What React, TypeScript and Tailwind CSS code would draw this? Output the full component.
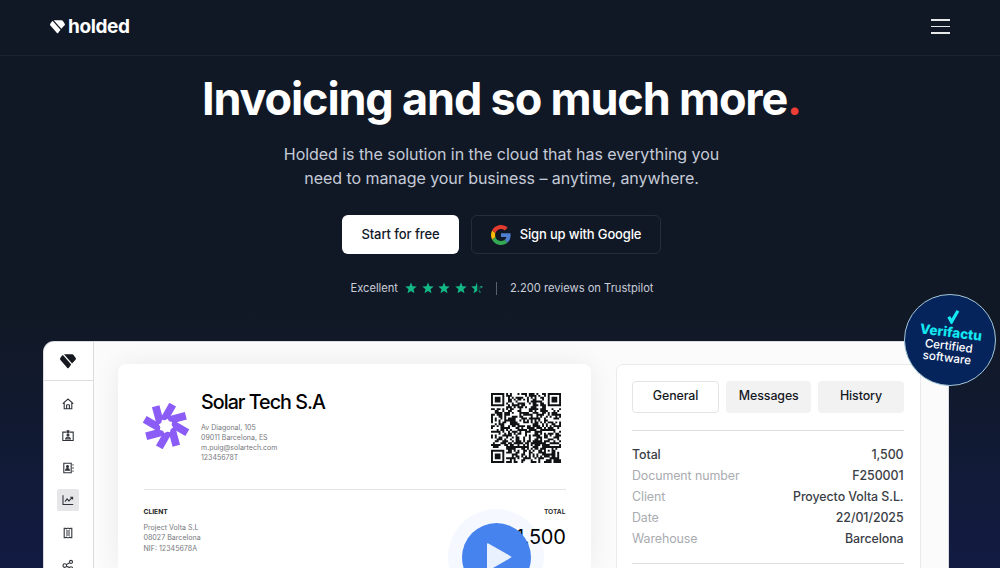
import React from "react";

const QR_SIZE = 37;

function finderAt(x: number, y: number): boolean | null {
  const corners = [
    [0, 0],
    [QR_SIZE - 7, 0],
    [0, QR_SIZE - 7],
  ];
  for (const [cx, cy] of corners) {
    const d = Math.max(Math.abs(x - cx - 3), Math.abs(y - cy - 3));
    if (d <= 4) return d <= 1 || d === 3;
  }
  const a = Math.max(Math.abs(x - 30), Math.abs(y - 30));
  if (a <= 2) return a !== 1;
  return null;
}

function qrPath(): string {
  let seed = 20250122;
  let d = "";
  for (let y = 0; y < QR_SIZE; y++) {
    for (let x = 0; x < QR_SIZE; x++) {
      seed = (Math.imul(seed, 1664525) + 1013904223) >>> 0;
      const fixed = finderAt(x, y);
      const on = fixed === null ? seed / 4294967296 < 0.55 : fixed;
      if (on) d += `M${x} ${y}h1.03v1.03h-1.03z`;
    }
  }
  return d;
}

const QR_PATH = qrPath();

function HoldedMark({ className }: { className: string }) {
  return (
    <svg viewBox="0 0 15 14" className={className} fill="currentColor">
      <path d="M2.9 1.2 10.5 9.7 8.3 12.8Q7.5 13.8 6.7 12.8L.4 5.6Q-.3 4.7.3 3.8L1.9 1.4Q2.4.8 2.9 1.2Z" />
      <path d="M3.7.2H11.5Q12.2.2 12.7.8L14.7 3.7Q15.2 4.5 14.6 5.3L11.3 8.8Z" />
    </svg>
  );
}

function GoogleLogo() {
  return (
    <svg viewBox="0 0 48 48" className="size-[20px]">
      <path fill="#4f7fd0" d="M46.98 24.55c0-1.57-.15-3.09-.38-4.55H24v9.02h12.94c-.58 2.96-2.26 5.48-4.78 7.18l7.73 6c4.51-4.18 7.09-10.36 7.09-17.65z" />
      <path fill="#35a853" d="M24 48c6.48 0 11.93-2.13 15.89-5.81l-7.73-6c-2.15 1.45-4.92 2.3-8.16 2.3-6.26 0-11.57-4.22-13.47-9.91l-7.98 6.19C6.51 42.62 14.62 48 24 48z" />
      <path fill="#fbbc05" d="M10.53 28.59c-.48-1.45-.76-2.99-.76-4.59s.27-3.14.76-4.59l-7.98-6.19C.92 16.46 0 20.12 0 24c0 3.88.92 7.54 2.56 10.78l7.97-6.19z" />
      <path fill="#e33b2e" d="M24 9.5c3.54 0 6.71 1.22 9.21 3.6l6.85-6.85C35.9 2.38 30.47 0 24 0 14.62 0 6.51 5.38 2.56 13.22l7.98 6.19C12.43 13.72 17.74 9.5 24 9.5z" />
    </svg>
  );
}

const STAR = "M6 .4 7.55 4.3 11.7 4.6 8.5 7.3 9.5 11.3 6 9.1 2.5 11.3 3.5 7.3.3 4.6 4.45 4.3Z";

function Stars() {
  return (
    <div className="flex gap-[4.5px]">
      {[0, 1, 2, 3].map((i) => (
        <svg key={i} viewBox="0 0 12 12" className="size-3" fill="#12b886">
          <path d={STAR} />
        </svg>
      ))}
      <svg viewBox="0 0 12 12" className="size-3">
        <path d={STAR} fill="#12b886" fillOpacity="0.22" />
        <path d="M6 .4V9.1L2.5 11.3 3.5 7.3.3 4.6 4.45 4.3Z" fill="#12b886" />
        <path d="m9 4.6 2.4.2-1.6 1.3M8.6 8.7l.6 2.2" stroke="#12b886" strokeWidth="0.8" fill="none" />
      </svg>
    </div>
  );
}

const navIcons: React.ReactNode[] = [
  <path d="M.8 5.7 6 1.1l5.2 4.6M2.2 4.7v6h7.6v-6M4.6 10.6V7.3q0-.6.6-.6h1.6q.6 0 .6.6v3.3" />,
  <>
    <path d="M4.3 2.1H.8v8.4h10.4V2.1H7.7M3.6 8.9q.3-1.7 2.4-1.7t2.4 1.7Z" />
    <circle cx="6" cy="5.1" r="1" fill="currentColor" />
    <path d="M5.1.8h1.8v2H5.1z" fill="currentColor" />
  </>,
  <>
    <path d="M1.8 1.2h7.4v9.6H1.8ZM11 2.2v1.4M11 5.3v1.4M11 8.4v1.4" />
    <circle cx="5.5" cy="4.5" r="1" fill="currentColor" />
    <path d="M3.5 8.2q.2-1.6 2-1.6t2 1.6Z" fill="currentColor" />
  </>,
  <path d="M1 1.2v9.3h10.2M3 7.6l2.1-2.7 1.8 2 3.5-3.5M8.2 3.2h2.4v2.3" />,
  <path d="M2.2 1.2h1.2l.9.6.9-.6h1.6l.9.6.9-.6h1.2v9.6H8.6l-.9-.6-.9.6H5.2l-.9-.6-.9.6H2.2ZM4 4h4M4 6h4M4 8h4" />,
  <>
    <circle cx="2.8" cy="6.6" r="1.8" />
    <circle cx="9" cy="2.9" r="1.5" />
    <circle cx="9" cy="9.3" r="1.6" />
    <path d="m4.4 5.6 3.2-1.9M4.5 7.3l2.9 1.3" />
  </>,
];

const details = [
  ["Document number", "F250001"],
  ["Client", "Proyecto Volta S.L."],
  ["Date", "22/01/2025"],
  ["Warehouse", "Barcelona"],
];

function Header() {
  return (
    <header className="flex h-[56px] shrink-0 items-center justify-between border-b border-[#1c2431] px-[50px]">
      <div className="flex items-center gap-[3px] pb-[1px] text-white">
        <HoldedMark className="h-[14px] w-[15px]" />
        <span className="text-[19px] leading-[20px] font-bold tracking-[-0.4px]">holded</span>
      </div>
      <div className="flex w-[19px] flex-col gap-[5px] pb-[2px] opacity-90">
        <span className="h-[1.5px] bg-white" />
        <span className="h-[1.5px] bg-white" />
        <span className="h-[1.5px] bg-white" />
      </div>
    </header>
  );
}

function Hero() {
  return (
    <section className="flex h-[286px] shrink-0 flex-col items-center">
      <h1 className="mt-[15px] ml-[3px] text-[45px] leading-[56px] font-bold tracking-[-1.16px] whitespace-nowrap text-white">
        Invoicing and so much more<span className="text-[#ef3e36]">.</span>
      </h1>
      <p className="mt-[15px] ml-[3px] text-center text-[16px] leading-[24px] tracking-[-0.05px] whitespace-nowrap text-[#c5cbd8]">
        Holded is the solution in the cloud that has everything you
        <br />
        need to manage your business – anytime, anywhere.
      </p>
      <div className="mt-[25px] ml-[3px] flex gap-[12px]">
        <button className="h-[39px] w-[117px] rounded-[6px] bg-white text-[13px] font-medium tracking-[-0.08px] text-[#111827]">
          Start for free
        </button>
        <button className="flex h-[39px] w-[190px] items-center justify-center gap-[9px] rounded-[6px] border border-[#252d3a] text-[13px] font-medium tracking-[-0.15px] text-white">
          <GoogleLogo />
          Sign up with Google
        </button>
      </div>
      <div className="mt-[26px] ml-[4px] flex h-[16px] items-center text-[11.15px] whitespace-nowrap text-[#c9ced9]">
        <span className="mr-[7px]">Excellent</span>
        <Stars />
        <span className="mr-[13px] ml-[13px] h-[13px] w-px bg-[#566070]" />
        <span>2.200 reviews on Trustpilot</span>
      </div>
    </section>
  );
}

function Sidebar() {
  return (
    <aside className="flex w-[50px] shrink-0 flex-col items-center border-r border-[#dcdcdf] bg-white pr-px">
      <div className="flex h-[39px] w-[49px] shrink-0 items-center justify-center border-b-[1.5px] border-[#dddde0] text-[#15181e]">
        <HoldedMark className="h-[15px] w-[16px]" />
      </div>
      <nav className="mt-[11.5px] flex flex-col gap-[10.3px]">
        {navIcons.map((icon, i) => (
          <span
            key={i}
            className={`flex size-[22px] items-center justify-center rounded-[2px] text-[#30343a] ${i === 3 ? "bg-[#e6e6e8]" : ""}`}
          >
            <svg viewBox="0 0 12 12" className="size-[12px]" fill="none" stroke="currentColor" strokeWidth="1.1">
              {icon}
            </svg>
          </span>
        ))}
      </nav>
    </aside>
  );
}

function SolarLogo() {
  return (
    <svg viewBox="-23 -23 46 46" className="mt-[14px] -ml-px size-[46px]" fill="#8b5cf6">
      <circle r="10.5" />
      {[30, 75, 120, 165, 210, 255, 300, 345].map((a) => (
        <rect key={a} transform={`rotate(${a})`} x="-8.7" y="-21.8" width="7.7" height="17.5" />
      ))}
      {[0, 45].map((a) => (
        <rect key={a} transform={`rotate(${a + 12})`} x="-5.2" y="-5.2" width="10.4" height="10.4" fill="#fff" />
      ))}
    </svg>
  );
}

function Invoice() {
  return (
    <div className="mt-[22px] ml-[24px] w-[473px] shrink-0 rounded-t-[8px] bg-white px-[25.5px] pt-[25px] shadow-[0_0_26px_rgba(0,0,0,0.07)]">
      <div className="flex h-[99.5px]">
        <SolarLogo />
        <div className="ml-[12.5px] flex-1">
          <div className="text-[19.7px] leading-[26px] font-medium tracking-[-0.98px] text-black">Solar Tech S.A</div>
          <div className="mt-[7.5px] text-[7px] leading-[10.3px] text-[#76787c]">
            Av Diagonal, 105
            <br />
            09011 Barcelona, ES
            <br />
            m.puig@solartech.com
            <br />
            12345678T
          </div>
        </div>
        <svg viewBox="0 0 37 37" className="mt-[4px] mr-[4.5px] size-[70px]" fill="#111214">
          <path d={QR_PATH} />
        </svg>
      </div>
      <div className="h-[1.5px] bg-[#e2e2e4]" />
      <div className="mt-[17px] flex justify-between">
        <div>
          <div className="text-[6.7px] leading-[10px] font-bold text-[#222]">CLIENT</div>
          <div className="mt-[6px] text-[7.1px] leading-[10.3px] text-[#76787c]">
            Project Volta S.L
            <br />
            08027 Barcelona
            <br />
            NIF: 12345678A
          </div>
        </div>
        <div className="text-right">
          <div className="text-[6.7px] leading-[10px] font-semibold text-[#222]">TOTAL</div>
          <div className="mt-[7px] text-[20px] leading-[26px] tracking-[-0.3px] text-black">1.500</div>
        </div>
      </div>
    </div>
  );
}

function DetailsPanel() {
  return (
    <div className="mt-[22px] ml-[24.5px] h-[260px] w-[305px] shrink-0 rounded-[7px] border-[1.5px] border-[#eaeaec] bg-white pr-[16px] pl-[15.5px] pt-[15.5px]">
      <div className="flex gap-[7px] text-[12.4px] font-medium tracking-[-0.1px] text-[#15181e]">
        <button className="h-[32px] flex-1 rounded-[4px] border-[1.5px] border-[#e4e4e6]">General</button>
        <button className="h-[32px] flex-1 rounded-[4px] bg-[#f2f2f3]">Messages</button>
        <button className="h-[32px] flex-1 rounded-[4px] bg-[#f2f2f3]">History</button>
      </div>
      <div className="mt-[17px] h-px bg-[#dddddf]" />
      <dl className="mt-[13px] text-[12.4px] leading-[21.2px] tracking-[-0.08px]">
        <div className="flex justify-between font-medium text-[#3a3e46]">
          <dt>Total</dt>
          <dd>1,500</dd>
        </div>
        {details.map(([label, value]) => (
          <div key={label} className="flex justify-between">
            <dt className="text-[#a9abb0]">{label}</dt>
            <dd className="font-medium text-[#3a3e46]">{value}</dd>
          </div>
        ))}
      </dl>
      <div className="mt-[13.5px] h-px bg-[#dddddf]" />
    </div>
  );
}

function Badge() {
  return (
    <div className="absolute top-[294px] left-[904px] flex size-[92px] items-center justify-center rounded-full border border-[#a5c8d8] bg-[#06245c]">
      <div className="flex rotate-[7deg] flex-col items-center pb-[6px] text-white">
        <svg viewBox="0 0 12 14" className="mb-[1px] h-[15px] w-[13px]">
          <path d="M1.8 7.6 4.9 12 9.6 1" fill="none" stroke="#12e9f2" strokeWidth="3" />
        </svg>
        <span className="text-[13.5px] leading-[15px] font-extrabold text-[#12e9f2]">Verifactu</span>
        <span className="mr-[1px] text-[11.6px] leading-[12.3px] font-medium">Certified</span>
        <span className="mr-[2px] text-[11.6px] leading-[12.3px] font-medium">software</span>
      </div>
    </div>
  );
}

export default function App() {
  return (
    <div className="relative flex h-[568px] w-[1000px] flex-col overflow-hidden bg-linear-to-b from-[#111825] from-55% to-[#121b42] font-[Inter,sans-serif]">
      <Header />
      <Hero />
      <main className="ml-[44px] flex min-h-0 w-[904px] flex-1 overflow-hidden rounded-t-[10px] bg-[#fbfbfb] shadow-[0_0_0_1px_#d9dbe0]">
        <Sidebar />
        <Invoice />
        <DetailsPanel />
      </main>
      <button className="absolute top-[509px] left-[448px] flex size-[96px] items-center justify-center rounded-full bg-[#3b82f6]/5">
        <span className="flex size-[69px] items-center justify-center rounded-full bg-[#4683ee]">
          <svg viewBox="0 0 26 30" className="ml-[6px] h-[30px] w-[26px]" fill="#eaf1fe">
            <path d="M1 2.2Q1 .6 2.4 1.4L25 14.4Q26 15 25 15.6L2.4 28.6Q1 29.4 1 27.8Z" />
          </svg>
        </span>
      </button>
      <Badge />
    </div>
  );
}
